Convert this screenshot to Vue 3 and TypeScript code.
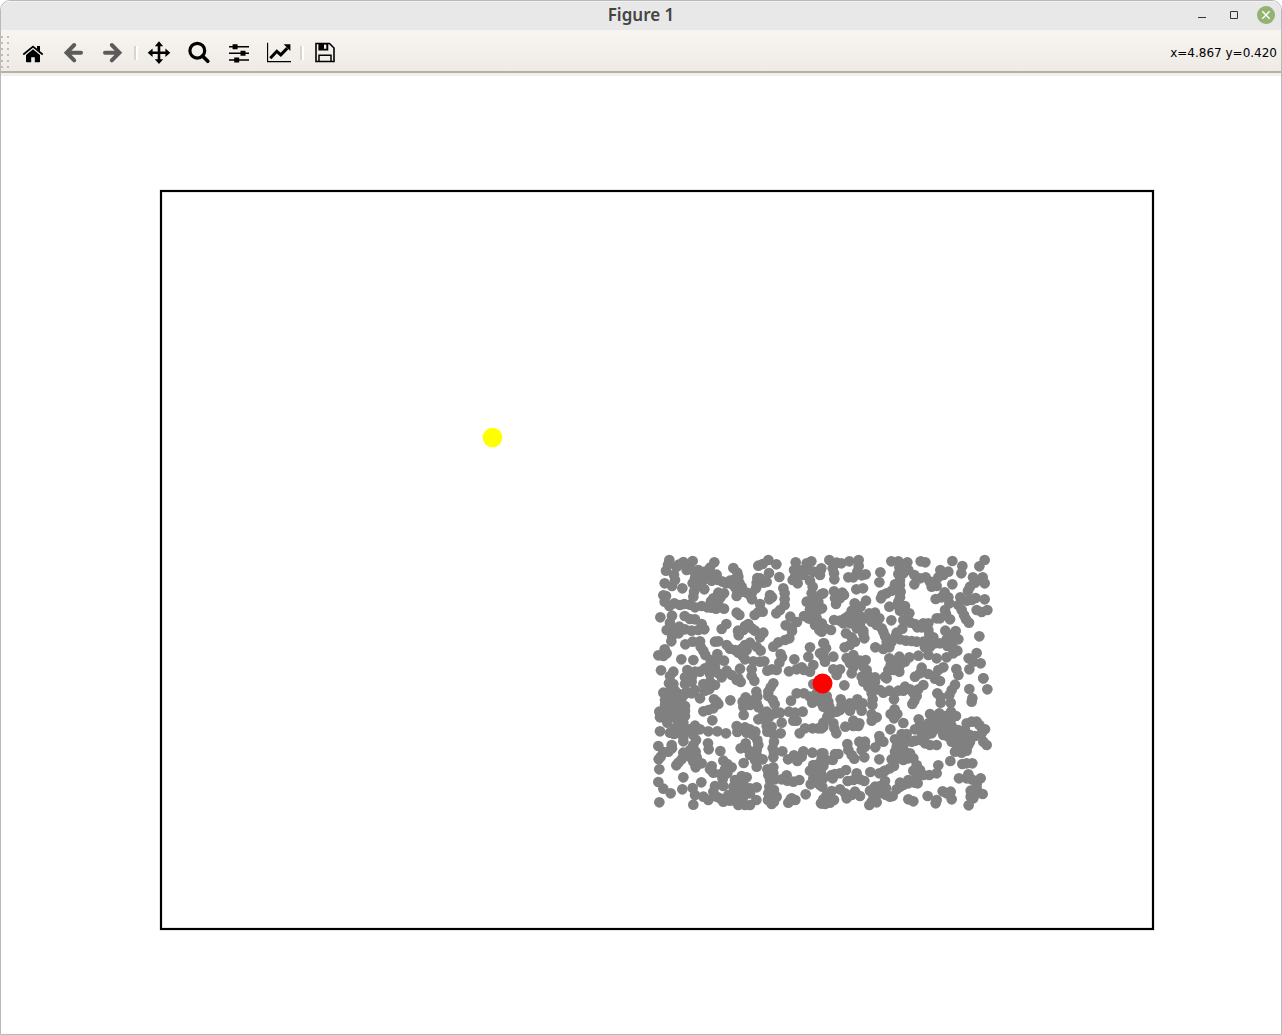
<script setup lang="ts">
interface Patch {
  x: number
  y: number
  points: string
}

interface Dot {
  x: number
  y: number
}

// Scatter samples, grouped in four patches. Points are in thirds of a canvas unit.
const patches: Patch[] = [
  {
    x: 1947,
    y: 1422,
    points: `58,30 54,44 48,62 44,100 66,108 72,74 80,50 100,36 128,33 118,50 145,60 110,60 86,44 75,90
      193,37 180,53 165,65 150,78 135,85 128,100 158,92 178,78 200,74 205,90 185,92 135,68
      97,115 163,118 140,110 132,125 130,140
      40,136 48,138 44,155 58,168 73,160 103,162 90,165 135,172 155,168 120,164
      218,95 228,100 240,92 250,54 262,68 265,80 250,90 268,98 275,110 255,112 245,102 262,125 260,138 280,125 205,128 222,130 212,142 190,145 183,154 205,152 198,176 222,176 172,172 185,173
      325,47 338,42 355,30 379,43 357,69 388,81 350,96 330,85 320,98 318,115 305,130 300,135 306,148 340,98 322,84 290,128
      360,135 366,142 358,148 400,115 404,130 404,148 404,165 390,180 379,190 330,162 338,185 325,186 314,195
      31,202 66,197 60,218 50,240 62,240 66,258 64,274 104,198 120,207 135,208 155,222 163,238 145,240 125,242 105,238 88,230 86,250 72,235
      229,222 215,237 260,188 268,195 264,242 266,256 280,240 295,222 305,235 315,242 340,248 330,262 285,228
      106,283 128,275 150,274 152,290 160,302 166,315 195,275 205,274 230,285 240,296 255,300 265,308 275,296 285,285 300,278 320,290 332,302 290,300 278,318 285,328
      421,200 407,226 426,243 441,216 418,265 405,270 385,277 370,290 425,232 462,198 475,205
      44,298 50,310 40,318 25,316 94,328 130,330 182,330 202,312 205,328 222,332 180,345 195,350
      33,361 70,365 60,378 112,360 125,382 105,382 150,365 165,355 135,365 180,372 205,370 230,362 245,375 215,382 265,385
      270,356 305,358 305,378 310,334 330,335 343,334 352,362 366,358 380,360 392,312 396,322 388,338 433,328 417,364 440,358 455,352 475,320 480,292 462,360 480,365 490,345 510,310 520,320 520,280
      437,37 432,60 435,80 428,90 443,100 470,40 484,34 450,60 460,75 475,60 490,65 512,60 480,92 488,110 485,130 470,155 495,145 515,132 490,165 505,155 480,178 492,190 505,180 485,208 495,225 508,240 500,205 515,220`,
  },
  {
    x: 2457,
    y: 1422,
    points: `28,30 50,38 64,40 38,55 42,70 43,88 88,34 116,30 116,48 112,65 4,55 0,75 85,82 100,82 125,76 137,73
      10,130 109,118 129,115 6,175 42,124 67,128 72,135 60,145 48,162 45,145 104,160 138,152 122,170 95,182 110,185 85,198
      214,34 235,34 262,37 238,52 265,60 235,72 250,70 302,34 316,37 181,67 178,97 397,33 427,48 424,70 494,30 478,49
      283,75 300,85 317,82 283,103 240,90 240,105 225,103 227,118 242,125 215,122 200,130 187,135 183,145 240,142 235,155 208,170 232,165 255,168 240,182 268,190 250,210 262,205 272,218
      361,60 385,65 370,75 355,82 345,95 335,110 350,108 330,95 397,103 374,127 347,147 365,142 385,142 388,160 375,180 378,192 360,205 350,205 390,208
      459,82 488,82 494,100 465,98 450,110 444,122 421,142 440,152 455,150 467,144 494,148 415,165 425,180 432,195 438,208 447,218 470,180 485,186 502,180
      42,210 60,212 75,205 70,220 90,220 105,210 120,198 135,205 148,190 165,188 178,205 155,215 170,225 185,235 195,258 190,245 120,225 110,235 130,242 214,211
      33,240 5,222 15,235 5,245 78,250 95,262 105,275 74,292 90,285 130,252 133,265
      247,236 230,248 292,232 285,222 310,220 325,220 305,232 325,240 328,255 225,262 240,268 215,275 200,275 258,272 275,273 290,275 310,275 325,275 330,290 315,292 345,280 340,262 360,280
      376,242 407,243 390,255 380,268 398,275 415,268 382,288 400,298 412,302 400,310 478,259
      166,292 190,297 208,292 40,320 12,280 18,295 10,310 15,335 80,324 100,315 105,328 90,340 120,332 137,330 100,352 95,370 130,350 140,360 125,380 145,378 40,358 60,358 50,375
      208,325 238,320 225,335 212,345 268,322 295,317 255,335 240,345 205,360 220,360 238,365 325,315 350,325 380,322 370,352 305,353 300,370 285,380 325,372 345,378 355,360
      409,357 415,375 446,325 470,309 460,335 482,340 448,358 490,385 195,380 165,382`,
  },
  {
    x: 1947,
    y: 1812,
    points: `57,10 70,12 105,12 125,5 160,12 180,5 195,15 178,28 150,55 165,32 135,30 110,35 125,40 40,38 60,32 75,32 88,42 45,60 62,52 75,60 95,55 105,42 60,75 45,75 75,78 90,75 105,78 28,95 45,92 60,95 80,95 95,95 105,92 30,112 45,115 52,128 75,112 90,112 105,108
      85,128 100,128 90,142 75,145 105,145 30,154 60,158 72,162 90,160 100,170 100,184 135,137 118,148 150,148 175,154 202,154 228,160 130,165 138,180 130,195 65,195 66,205
      192,58 200,65 205,72 190,85 175,90 160,94 187,121 241,61 281,105
      272,6 260,0 313,2 319,35 322,50 287,52 278,65 280,80 300,75 310,60 320,70 325,82
      370,10 355,35 362,22 355,48 368,60 374,73
      325,118 340,105 350,95 345,120 358,110 375,100 390,98 350,138 352,155 365,140 395,128 392,160 372,165 372,185 368,205 370,232 372,218 397,214
      440,40 423,62 462,40 480,50 487,68 500,60 515,70 500,40 417,95 458,95 435,98 430,122 440,122
      449,160 465,145 488,145 505,145 520,140
      260,138 262,156 285,142 300,148 316,155 310,165 290,158 322,180 325,195 287,190 272,205 290,205 300,215 320,210 300,225 320,225 315,240 338,238 320,260
      281,249 174,190 176,208 211,213 25,198 40,216 55,215 32,230 26,238 28,268 100,218 95,238 85,248 79,256 120,210 120,230 140,232 137,215 130,245 155,250 137,262 185,258
      220,242 232,252 245,262 225,268 212,282 190,278 180,268 218,298 232,280
      100,292 154,307 97,328 128,324 25,306 40,326 62,340 28,367 130,374 135,345 160,350 175,360 190,335 195,318 220,318 200,350 220,365 210,355
      255,300 275,288 290,292 270,308 250,320 285,320 300,325 320,322 250,340 270,335 300,340 235,345 240,362 255,362 265,375 285,375 300,375 319,360 280,350
      352,268 370,262 355,285 370,280 360,300 375,298 358,320 372,330 355,340 380,350 354,360 372,365 365,372 395,298 410,286 412,302 430,305 448,300
      414,238 432,226 442,243 460,214 455,230 487,218 515,220 467,343 425,355 436,360 415,368 422,358
      490,255 505,252 520,258 480,272 495,280 512,275 490,295 505,295 520,295 482,313 508,312 517,320 513,370 490,12`,
  },
  {
    x: 2457,
    y: 1812,
    points: `73,16 20,48 10,65 25,65 20,85 35,100 28,80 10,80 5,50 22,110 10,128 5,145 40,130 43,145 49,160
      62,58 65,75 60,90 90,70 112,58 128,70 105,75 90,92 125,92 50,95 76,140 100,122 118,130 100,138 115,138
      130,5 150,10 165,5 145,20 165,25 155,40 158,58 157,75 155,103 170,112 155,122 180,30 190,38 208,32 222,40 235,32 255,20 270,28 280,38 295,28 310,15 250,32 290,48 283,62 277,72 222,58 224,88 212,102 232,102 222,115 200,-5 360,3 345,-4 405,14 395,30 352,40 388,45 362,68 392,68 362,52 448,27 502,28 457,55 455,65 490,-5
      211,148 250,129 296,118 330,102 345,110 358,100 375,108 393,95 408,108 395,115
      285,148 300,135 312,145 325,130 340,125 355,130 370,125 385,130 395,138 345,145 360,148 380,155 335,160 320,165 305,160 300,180 315,190 330,195 350,195 285,182 370,165 385,170 400,160 415,150 395,185 415,175 425,165 435,150 440,130 455,125 470,125 478,135 495,148 485,160 450,165 430,180 410,195 425,200 445,195 450,185 405,215 425,218 440,212 490,185 500,195 465,168
      225,178 245,162 260,162 240,185 262,180 275,185 230,200 250,195 225,215 215,238 240,220 255,215 270,220 235,235 250,240 265,235 280,235 210,265 222,258 195,272 290,255 280,272 300,270 290,285 310,285 328,285 350,280 355,256
      178,168 190,185 166,202 180,180 82,192 85,210 103,236 118,185 135,185 135,200 125,210 133,232 178,238 95,225
      10,220 20,240 38,240 45,222 55,222 5,235 2,268 5,285 5,300 0,315 391,243 427,252 457,250 440,250
      78,270 60,280 45,282 38,295 35,285 110,280 83,303 100,300 120,298 133,303 151,276 178,280 190,275
      35,333 60,328 20,345 10,358 30,360 42,360 5,370 15,372 30,368 75,340 80,355 95,345 105,335 120,348
      165,320 180,318 195,303 198,325 150,332 160,345 180,340 198,345 218,348 210,350 230,328 240,308 250,315 240,320 265,300 265,310 285,308 293,310 148,375 155,365 170,367
      265,358 280,364 323,348 350,360 347,370 368,334 392,335 395,358 380,340
      417,295 445,283 440,295 455,298 482,295 470,312 470,325 452,332 465,342 488,342 452,350 460,355 446,376`,
  },
]

const particles: Dot[] = patches.flatMap((patch) =>
  patch.points
    .trim()
    .split(/\s+/)
    .map((pair) => {
      const [x, y] = pair.split(',').map(Number)
      return { x: patch.x + x, y: patch.y + y }
    }),
)
</script>

<template>
  <main class="window">
    <header class="titlebar">
      <h1 class="title">Figure 1</h1>
      <div class="controls">
        <button type="button" aria-label="Minimize">
          <svg width="18" height="18" viewBox="0 0 18 18"><path d="M5 11.5h8" stroke="#333" fill="none" /></svg>
        </button>
        <button type="button" aria-label="Maximize">
          <svg width="18" height="18" viewBox="0 0 18 18"><path d="M5.5 5.5h7v7h-7z" stroke="#333" fill="none" /></svg>
        </button>
        <button type="button" aria-label="Close">
          <svg width="18" height="18" viewBox="0 0 18 18">
            <circle cx="9" cy="9" r="9" fill="#92b372" />
            <path d="M5.3 5.3l7.4 7.4M12.7 5.3l-7.4 7.4" stroke="#fff" stroke-width="1.4" />
          </svg>
        </button>
      </div>
    </header>

    <div class="toolbar" role="toolbar" aria-label="Plot tools">
      <span class="handle"></span>
      <button type="button" aria-label="Home">
        <svg class="icon" viewBox="0 0 24 24">
          <path d="M12 8.3l7 5.8v6.4q0 .8-.8.8h-4.4v-5h-3.6v5H5.8q-.8 0-.8-.8v-6.4z" />
          <path d="M2.3 13.5L12 5.5l9.7 8" fill="none" stroke="#000" stroke-width="1.7" />
          <path d="M16 5h3v5.5l-3-2.5z" />
        </svg>
      </button>
      <button type="button" aria-label="Back">
        <svg class="icon arrow" viewBox="0 0 24 24">
          <path d="M13.2 4L5.6 11.7l7.6 7.7M6 11.7h14" />
        </svg>
      </button>
      <button type="button" aria-label="Forward">
        <svg class="icon arrow" viewBox="0 0 24 24">
          <path d="M10.8 4l7.6 7.7-7.6 7.7M18 11.7H4" />
        </svg>
      </button>
      <span class="separator"></span>
      <button type="button" aria-label="Pan">
        <svg class="icon" viewBox="0 0 24 24">
          <path d="M12 3v17.5M3 11.7h18" stroke="#000" stroke-width="2.6" />
          <path d="M12 .3l4.2 4.9H7.8zM12 23.1l4.2-4.9H7.8zM.7 11.7l4.9-4.2v8.4zM23.3 11.7l-4.9-4.2v8.4z" />
        </svg>
      </button>
      <button type="button" aria-label="Zoom">
        <svg class="icon" viewBox="0 0 24 24">
          <circle cx="10.3" cy="9.7" r="7.4" fill="none" stroke="#000" stroke-width="3.2" />
          <path d="M15.5 15l5.3 5.3" stroke="#000" stroke-width="3.6" stroke-linecap="round" />
        </svg>
      </button>
      <button type="button" aria-label="Configure subplots">
        <svg class="icon" viewBox="0 0 24 24">
          <path d="M2 5.8h20M2 12.3h20M2 18.9h20" stroke="#000" stroke-width="1.5" />
          <path d="M5.6 3.3h5v5h-5zM13.5 9.8h5v5h-5zM7.2 16.4h5v5h-5z" />
        </svg>
      </button>
      <button type="button" aria-label="Edit axes">
        <svg class="icon" viewBox="0 0 24 24">
          <path d="M.5 1.7v19H24" fill="none" stroke="#000" stroke-width="1.3" />
          <path d="M3.3 17.2l6.5-6.9 4 3.6 6.5-6.8" fill="none" stroke="#000" stroke-width="3" />
          <path d="M16.7 3.3h6.7v6.7z" />
        </svg>
      </button>
      <span class="separator"></span>
      <button type="button" aria-label="Save">
        <svg class="icon" viewBox="0 0 24 24">
          <path d="M3 2.5h13.5L21 7v13.5H3z" fill="none" stroke="#000" stroke-width="1.6" />
          <path d="M5.4 2h9.9v7.6H5.4zM11 3.5v4.3h2.3V3.5z" fill-rule="evenodd" />
          <path d="M6 20.5v-6.2h12v6.2" fill="none" stroke="#000" stroke-width="1.5" />
        </svg>
      </button>
      <output class="coords">x=4.867 y=0.420</output>
    </div>

    <svg class="figure" viewBox="0 0 1280 958" role="img" aria-label="Scatter plot">
      <rect x="160" y="115" width="992" height="738" fill="none" stroke="#000" stroke-width="2.2" />
      <g transform="scale(0.333333)" fill="#808080">
        <circle v-for="(dot, i) in particles" :key="i" :cx="dot.x" :cy="dot.y" r="16" />
      </g>
      <circle cx="491.5" cy="361.5" r="9.8" fill="#ff0" />
      <circle cx="821.5" cy="607.5" r="10" fill="#f00" />
    </svg>
  </main>
</template>

<style>
body {
  margin: 0;
  background: #fff;
}
</style>

<style scoped>
.window {
  box-sizing: border-box;
  min-height: 100vh;
  border: 1px solid #b9b9b9;
  border-radius: 10px 10px 0 0;
  overflow: hidden;
  background: #fff;
}

.titlebar {
  display: grid;
  grid-template-columns: 1fr auto 1fr;
  align-items: start;
  height: 29px;
  background: #e8e8e8;
  box-shadow: inset 0 1px #f2f2f2;
}

.title {
  grid-column: 2;
  margin: 0;
  font: 600 17px/27px "Noto Sans", "Open Sans", sans-serif;
  color: #444;
}

.controls {
  display: flex;
  justify-content: flex-end;
  gap: 2px;
}

button {
  display: flex;
  align-items: center;
  justify-content: center;
  padding: 0;
  border: 0;
  background: none;
}

.controls button {
  width: 30px;
  height: 28px;
}

.toolbar {
  display: flex;
  align-items: center;
  box-sizing: border-box;
  height: 46px;
  padding: 5px 4px 3px 0;
  border-bottom: 2px solid #f3f0eb;
  background: linear-gradient(#f8f5f0, #eeebe6 41px, #b5b1a8 41px, #b5b1a8 43px, #f3f0eb 43px);
}

.toolbar button {
  width: 40px;
  height: 36px;
}

.icon {
  width: 24px;
  height: 24px;
}

.arrow {
  fill: none;
  stroke: #5c5b59;
  stroke-width: 4;
  stroke-linecap: round;
}

.handle {
  width: 12px;
  height: 36px;
  background: conic-gradient(from 90deg at 4px 4px, #c0bdb8 90deg, transparent 0) 2px 3px / 6px 6px;
}

.separator {
  box-sizing: border-box;
  width: 4px;
  height: 14px;
  margin: 0 1px;
  border-left: 2px solid #d8d5d0;
  border-right: 2px solid #fff;
}

.coords {
  margin-left: auto;
  font: 12px/16px "DejaVu Sans", sans-serif;
  color: #000;
}

.figure {
  display: block;
  width: 100%;
}
</style>
